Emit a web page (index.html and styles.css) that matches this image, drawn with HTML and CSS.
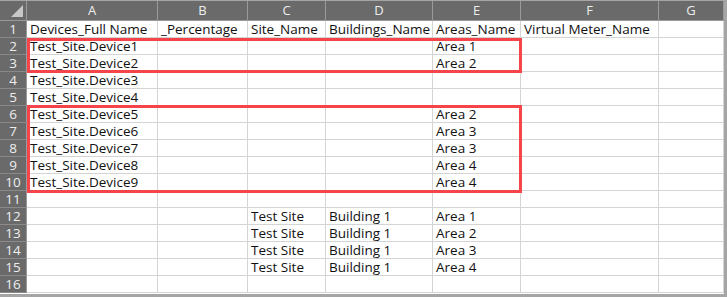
FILE: index.html
```html
<!DOCTYPE html>
<html>
<head>
<meta charset="utf-8">
<link rel="stylesheet" href="styles.css">
</head>
<body>
<div class="sheet">
  <div class="grid">
    <div class="hd corner"><span class="tri"></span></div>
    <div class="hd col">A</div><div class="hd col">B</div><div class="hd col">C</div><div class="hd col">D</div><div class="hd col">E</div><div class="hd col">F</div><div class="hd col">G</div>

    <div class="hd row">1</div><div class="c">Devices_Full Name</div><div class="c">_Percentage</div><div class="c">Site_Name</div><div class="c">Buildings_Name</div><div class="c">Areas_Name</div><div class="c">Virtual Meter_Name</div><div class="c"></div>
    <div class="hd row">2</div><div class="c">Test_Site.Device1</div><div class="c"></div><div class="c"></div><div class="c"></div><div class="c">Area 1</div><div class="c"></div><div class="c"></div>
    <div class="hd row">3</div><div class="c">Test_Site.Device2</div><div class="c"></div><div class="c"></div><div class="c"></div><div class="c">Area 2</div><div class="c"></div><div class="c"></div>
    <div class="hd row">4</div><div class="c">Test_Site.Device3</div><div class="c"></div><div class="c"></div><div class="c"></div><div class="c"></div><div class="c"></div><div class="c"></div>
    <div class="hd row">5</div><div class="c">Test_Site.Device4</div><div class="c"></div><div class="c"></div><div class="c"></div><div class="c"></div><div class="c"></div><div class="c"></div>
    <div class="hd row">6</div><div class="c">Test_Site.Device5</div><div class="c"></div><div class="c"></div><div class="c"></div><div class="c">Area 2</div><div class="c"></div><div class="c"></div>
    <div class="hd row">7</div><div class="c">Test_Site.Device6</div><div class="c"></div><div class="c"></div><div class="c"></div><div class="c">Area 3</div><div class="c"></div><div class="c"></div>
    <div class="hd row">8</div><div class="c">Test_Site.Device7</div><div class="c"></div><div class="c"></div><div class="c"></div><div class="c">Area 3</div><div class="c"></div><div class="c"></div>
    <div class="hd row">9</div><div class="c">Test_Site.Device8</div><div class="c"></div><div class="c"></div><div class="c"></div><div class="c">Area 4</div><div class="c"></div><div class="c"></div>
    <div class="hd row">10</div><div class="c">Test_Site.Device9</div><div class="c"></div><div class="c"></div><div class="c"></div><div class="c">Area 4</div><div class="c"></div><div class="c"></div>
    <div class="hd row">11</div><div class="c"></div><div class="c"></div><div class="c"></div><div class="c"></div><div class="c"></div><div class="c"></div><div class="c"></div>
    <div class="hd row">12</div><div class="c"></div><div class="c"></div><div class="c">Test Site</div><div class="c">Building 1</div><div class="c">Area 1</div><div class="c"></div><div class="c"></div>
    <div class="hd row">13</div><div class="c"></div><div class="c"></div><div class="c">Test Site</div><div class="c">Building 1</div><div class="c">Area 2</div><div class="c"></div><div class="c"></div>
    <div class="hd row">14</div><div class="c"></div><div class="c"></div><div class="c">Test Site</div><div class="c">Building 1</div><div class="c">Area 3</div><div class="c"></div><div class="c"></div>
    <div class="hd row">15</div><div class="c"></div><div class="c"></div><div class="c">Test Site</div><div class="c">Building 1</div><div class="c">Area 4</div><div class="c"></div><div class="c"></div>
    <div class="hd row">16</div><div class="c"></div><div class="c"></div><div class="c"></div><div class="c"></div><div class="c"></div><div class="c"></div><div class="c"></div>
  </div>
  <div class="mark mark1"></div>
  <div class="mark mark2"></div>
</div>
</body>
</html>
```
FILE: styles.css
```css
html, body {
  margin: 0;
  padding: 0;
  background: #ffffff;
}
.sheet {
  position: relative;
  width: 724px;
  height: 293px;
  border-top: 1px solid #a5a5a5;
  border-right: 3px solid #a5a5a5;
  border-bottom: 3px solid #a5a5a5;
  overflow: hidden;
  font-family: "Open Sans", "Noto Sans", sans-serif;
  font-size: 13.5px;
  color: #111111;
}
.grid {
  display: grid;
  grid-template-columns: 27px 131px 90px 78px 107px 88px 138px 65px;
  grid-template-rows: 20px repeat(16, 17px);
}
.c {
  border-right: 1px solid #d4d4d4;
  border-bottom: 1px solid #d4d4d4;
  padding-left: 3px;
  line-height: 17px;
  white-space: nowrap;
  overflow: hidden;
}
.hd {
  background: #6a6a6a;
  color: #eeeeee;
  text-align: center;
  white-space: nowrap;
}
.col {
  border-right: 1px solid #9a9a9a;
  border-bottom: 1px solid #9a9a9a;
  line-height: 19px;
  font-size: 13px;
}
.row {
  border-right: 1px solid #9a9a9a;
  border-bottom: 1px solid #8a8a8a;
  line-height: 17px;
}
.corner {
  position: relative;
  border-right: 1px solid #9a9a9a;
  border-bottom: 1px solid #9a9a9a;
}
.tri {
  position: absolute;
  right: 3px;
  bottom: 3px;
  width: 0;
  height: 0;
  border-left: 12px solid transparent;
  border-bottom: 12px solid #c8c8c8;
}
.mark {
  position: absolute;
  border: 3px solid #f5444a;
  box-sizing: border-box;
}
.mark1 {
  left: 27px;
  top: 37px;
  width: 495px;
  height: 35px;
}
.mark2 {
  left: 27px;
  top: 104px;
  width: 495px;
  height: 88px;
}
```
